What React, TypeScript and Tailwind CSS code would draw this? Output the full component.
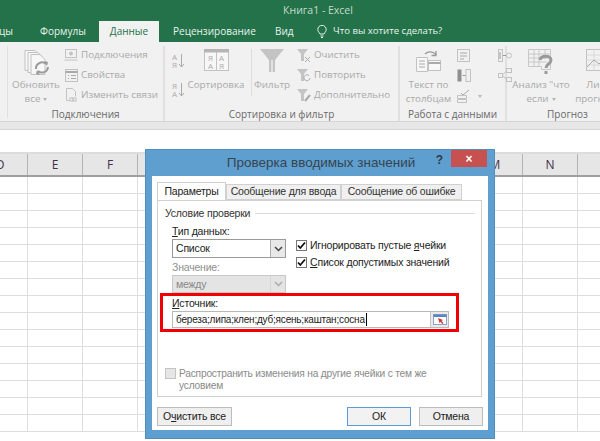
import type { ReactNode } from "react";

const ribbonFont = { fontFamily: '"Open Sans", "Noto Sans", sans-serif' };
const dialogFont = { fontFamily: '"Liberation Sans", "Noto Sans", sans-serif' };

// G to L sit behind the dialog
const columns = ["D", "E", "F", "", "", "", "", "", "", "M", "N", ""];
const rowCount = 16;

function Ico({ w, h, children }: { w: number; h: number; children: ReactNode }) {
  return (
    <svg width={w} height={h} viewBox={`0 0 ${w} ${h}`} fill="none" stroke="#c2c2c2" strokeWidth="1" className="shrink-0">
      {children}
    </svg>
  );
}

function SmallRow({ icon, label }: { icon: ReactNode; label: string }) {
  return (
    <div className="flex h-[20px] items-center gap-[3px] whitespace-nowrap text-[#a9a9a9]">
      <div className="flex w-[14px] justify-center">{icon}</div>
      <span>{label}</span>
    </div>
  );
}

function BigButton({ w, icon, lines, arrow }: { w: number; icon: ReactNode; lines: string[]; arrow?: boolean }) {
  return (
    <div className="flex shrink-0 flex-col items-center text-center leading-[14px] text-[#a9a9a9]" style={{ width: w }}>
      <div className="flex h-[29px] items-start justify-center">{icon}</div>
      <div className="whitespace-nowrap">{lines[0]}</div>
      {lines[1] && (
        <div className="whitespace-nowrap">
          {lines[1]}
          {arrow && <span className="ml-[3px] inline-block border-x-[2.5px] border-t-[3px] border-x-transparent border-t-[#b5b5b5] align-middle" />}
        </div>
      )}
    </div>
  );
}

function Group({ w, label, children }: { w: number; label: string; children: ReactNode }) {
  return (
    <div className="flex shrink-0 flex-col border-r-2 border-[#e0e0e0]" style={{ width: w }}>
      <div className="flex h-[61px] items-start">{children}</div>
      <div className="whitespace-nowrap text-center text-[10px] leading-[14px] text-[#6a6a6a]">{label}</div>
    </div>
  );
}

function Ribbon() {
  return (
    <div className="flex h-[79px] overflow-hidden bg-[#f1f1f1] pl-[7px] pt-[4px] text-[9.8px]" style={ribbonFont}>
      <div className="h-[72px] w-[1px] shrink-0 bg-[#e0e0e0]" />
      <Group w={157} label="Подключения">
        <div className="flex pl-[5px] pt-[3px]">
          <BigButton
            w={46}
            lines={["Обновить", "все"]}
            arrow
            icon={
              <Ico w={26} h={28}>
                <path d="M2 1.5h10l4 4v16H2z" fill="#f7f7f7" />
                <path d="M5 3.5h10l4 4v16H5z" fill="#f7f7f7" />
                <path d="M8 5.5h9l5 5v15H8z" fill="#f7f7f7" />
                <path d="M25 18a6 6 0 0 1-10 4M13 20a6 6 0 0 1 10-5" stroke="#9a9a9a" strokeWidth="2" />
                <path d="M21 12l4 1-1 4zM17 26l-4-1 1-4z" fill="#9a9a9a" stroke="none" />
              </Ico>
            }
          />
          <div className="ml-[5px] mt-[-4px] flex flex-col">
            <SmallRow
              label="Подключения"
              icon={
                <Ico w={14} h={12}>
                  <rect x="1.5" y="0.5" width="11" height="8" />
                  <path d="M0.5 11h13" />
                  <circle cx="7" cy="4.5" r="1.5" fill="#c2c2c2" />
                </Ico>
              }
            />
            <SmallRow
              label="Свойства"
              icon={
                <Ico w={13} h={13}>
                  <rect x="0.5" y="0.5" width="12" height="12" />
                  <path d="M0.5 3h12" strokeWidth="2" stroke="#aaa" />
                  <path d="M3 6.5h1M6 6.5h5M3 9.5h1M6 9.5h5" stroke="#aaa" />
                </Ico>
              }
            />
            <SmallRow
              label="Изменить связи"
              icon={
                <Ico w={12} h={14}>
                  <path d="M1.5 0.5h6l3 3v5M1.5 0.5v12h3" />
                  <rect x="5" y="10" width="3" height="3" />
                  <rect x="8" y="10" width="3" height="3" />
                </Ico>
              }
            />
          </div>
        </div>
      </Group>
      <Group w={235} label="Сортировка и фильтр">
        <div className="flex pl-[7px] pt-[3px]">
          <div className="flex w-[14px] flex-col gap-[9px] pt-[3px]">
            <Ico w={13} h={20}>
              <text x="0" y="8" fontSize="8" fill="#aaa" stroke="none">А</text>
              <text x="0" y="16" fontSize="8" fill="#aaa" stroke="none">Я</text>
              <path d="M9.5 2v13M7 12l2.5 3 2.5-3" stroke="#aaa" />
            </Ico>
            <Ico w={13} h={20}>
              <text x="0" y="8" fontSize="8" fill="#aaa" stroke="none">Я</text>
              <text x="0" y="16" fontSize="8" fill="#aaa" stroke="none">А</text>
              <path d="M9.5 2v13M7 12l2.5 3 2.5-3" stroke="#aaa" />
            </Ico>
          </div>
          <BigButton
            w={60}
            lines={["Сортировка"]}
            icon={
              <Ico w={25} h={22}>
                <rect x="0.5" y="0.5" width="24" height="21" fill="#f7f7f7" />
                <rect x="0" y="0" width="25" height="3.5" fill="#b5b5b5" stroke="none" />
                <path d="M12.5 3v18" />
                <text x="4" y="12" fontSize="8" fill="#aaa" stroke="none">Я</text>
                <text x="15" y="12" fontSize="8" fill="#aaa" stroke="none">А</text>
                <text x="4" y="20" fontSize="8" fill="#aaa" stroke="none">А</text>
                <text x="15" y="20" fontSize="8" fill="#aaa" stroke="none">Я</text>
              </Ico>
            }
          />
          <div className="ml-[5px] h-[47px] w-[1px] bg-[#dcdcdc]" />
          <BigButton
            w={40}
            lines={["Фильтр"]}
            icon={
              <Ico w={24} h={24}>
                <path d="M0 0h24l-9 11v12h-6V11z" fill="#c4c4c4" stroke="none" />
                <path d="M11 11h2v12h-2z" fill="#e2e2e2" stroke="none" />
              </Ico>
            }
          />
          <div className="ml-[5px] mt-[-4px] flex flex-col">
            <SmallRow
              label="Очистить"
              icon={
                <Ico w={14} h={13}>
                  <path d="M0 0h11L7 5v7H4V5z" fill="#c4c4c4" stroke="none" />
                  <path d="M8 8l5 5M13 8l-5 5" stroke="#aaa" />
                </Ico>
              }
            />
            <SmallRow
              label="Повторить"
              icon={
                <Ico w={14} h={13}>
                  <path d="M0 0h11L7 5v7H4V5z" fill="#c4c4c4" stroke="none" />
                  <path d="M13 9a3 3 0 1 1-1-2.5" stroke="#aaa" />
                </Ico>
              }
            />
            <SmallRow
              label="Дополнительно"
              icon={
                <Ico w={14} h={13}>
                  <path d="M0 0h11L7 5v7H4V5z" fill="#c4c4c4" stroke="none" />
                  <path d="M8 12l5-6" stroke="#aaa" strokeWidth="2" />
                </Ico>
              }
            />
          </div>
        </div>
      </Group>
      <Group w={107} label="Работа с данными">
        <div className="flex pl-[5px] pt-[3px]">
          <BigButton
            w={47}
            lines={["Текст по", "столбцам"]}
            icon={
              <Ico w={27} h={24}>
                <path d="M1.5 8.5h11v14h-11z" fill="#f7f7f7" />
                <path d="M4 12h6M4 15h6M4 18h6" stroke="#aaa" />
                <rect x="13.5" y="11.5" width="12" height="10" fill="#f7f7f7" />
                <path d="M13.5 14h12" stroke="#aaa" strokeWidth="2" />
                <path d="M10 5a7 7 0 0 1 11 1M21 2v4.5h-4.5" stroke="#999" strokeWidth="1.3" />
              </Ico>
            }
          />
          <div className="ml-[5px] flex flex-col gap-[7px]">
            <Ico w={13} h={13}>
              <rect x="0.5" y="0.5" width="12" height="12" />
              <path d="M3 4h7M3 7h7M3 10h4" stroke="#aaa" />
            </Ico>
            <Ico w={14} h={13}>
              <rect x="0.5" y="0.5" width="4" height="12" fill="#8f8f8f" stroke="none" />
              <rect x="9" y="0.5" width="4.5" height="12" />
              <path d="M5.5 6.5h3" stroke="#999" />
            </Ico>
            <div className="flex items-center gap-[7px]">
              <Ico w={14} h={14}>
                <path d="M0.5 6.5h9v3h-9zM0.5 10.5h9v3h-9z" />
                <path d="M4 4l2 2 6-5" stroke="#aaa" />
              </Ico>
              <span className="inline-block border-x-[2.5px] border-t-[3px] border-x-transparent border-t-[#b5b5b5]" />
            </div>
          </div>
          <div className="ml-[16px] flex flex-col gap-[6px]">
            <Ico w={14} h={13}>
              <rect x="0.5" y="0.5" width="4" height="12" />
              <path d="M2 3v7" stroke="#999" />
              <circle cx="11" cy="6.5" r="2.5" />
              <path d="M5 6.5h3" stroke="#999" />
            </Ico>
            <Ico w={14} h={14}>
              <rect x="0.5" y="5.5" width="4" height="4" />
              <rect x="8.5" y="0.5" width="5" height="4" />
              <rect x="8.5" y="9.5" width="5" height="4" />
              <path d="M4.5 7L8.5 3M4.5 8L8.5 11" />
            </Ico>
          </div>
        </div>
      </Group>
      <div className="flex shrink-0 flex-col">
        <div className="flex h-[61px] items-start pl-[5px] pt-[3px]">
          <BigButton
            w={58}
            lines={['Анализ "что', "если"]}
            arrow
            icon={
              <Ico w={26} h={27}>
                <path d="M0.5 0.5h22v20h-9v-3h-13zM0.5 5h22M0.5 9h22M0.5 13h18M6 0.5v17M11 0.5v17M17 0.5v10" stroke="#c8c8c8" />
                <path d="M12 11c1-5 11-5 11 0 0 4-5 4-5 8M18 22v3" stroke="#9a9a9a" strokeWidth="3" />
              </Ico>
            }
          />
          <div className="ml-[5px]">
            <BigButton
              w={45}
              lines={["Лист", "прогноза"]}
              icon={
                <Ico w={24} h={22}>
                  <rect x="0.5" y="0.5" width="23" height="21" />
                  <path d="M0.5 6h23M0.5 11h23M0.5 16h23M8 0.5v21M16 0.5v21" stroke="#d8d8d8" />
                  <path d="M1 18l7-7 5 4 6-7" stroke="#aaa" />
                </Ico>
              }
            />
          </div>
        </div>
        <div className="pl-[40px] text-[10px] leading-[14px] text-[#6a6a6a]">Прогноз</div>
      </div>
    </div>
  );
}

function Sheet() {
  return (
    <div className="h-[311px] overflow-hidden bg-white">
      <div className="h-[9px] border-y border-[#d5d5d5] bg-[#e7e7e7]" />
      <div className="h-[22px]" />
      <div className="ml-[-27px] flex h-[25px] w-[660px] border-y-2 border-t-[#dcdcdc] border-b-[#9f9f9f] bg-[#e6e6e6]" style={ribbonFont}>
        {columns.map((c, i) => (
          <div key={i} className="flex h-full w-[55px] shrink-0 items-center justify-center border-r border-[#b4b4b4] text-[12px] text-[#44304a]">
            {c}
          </div>
        ))}
      </div>
      {Array.from({ length: rowCount }).map((_, r) => (
        <div key={r} className="ml-[-27px] flex h-[17px] w-[660px]">
          {columns.map((_, i) => (
            <div key={i} className="h-full w-[55px] shrink-0 border-r border-b border-[#dedede]" />
          ))}
        </div>
      ))}
    </div>
  );
}

function Check({ checked, disabled }: { checked?: boolean; disabled?: boolean }) {
  return (
    <div className={`flex h-[11px] w-[11px] shrink-0 items-center justify-center border ${disabled ? "border-[#c4c4c4] bg-[#e6e6e6]" : "border-[#777] bg-white"}`}>
      {checked && (
        <svg width="9" height="9" viewBox="0 0 9 9" fill="none" stroke="#111" strokeWidth="1.8">
          <path d="M1 4.5l2.3 2.5L8 1.5" />
        </svg>
      )}
    </div>
  );
}

function Select({ value, disabled }: { value: string; disabled?: boolean }) {
  return (
    <div className={`flex w-[114px] shrink-0 items-stretch border ${disabled ? "h-[18px] border-[#c8c8c8] bg-[#e4e4e4] text-[#8a8a8a]" : "h-[19px] border-[#9a9a9a] bg-white text-[#222]"}`}>
      <div className="flex-1 pl-[3px] leading-[17px]">{value}</div>
      <div className={`flex w-[15px] items-center justify-center border-l ${disabled ? "border-[#d6d6d6]" : "border-[#b0b0b0] bg-[#e8e8e8]"}`}>
        <svg width="9" height="6" viewBox="0 0 9 6" fill="none" stroke={disabled ? "#aaa" : "#444"} strokeWidth="1.5">
          <path d="M1 1l3.5 3.5L8 1" />
        </svg>
      </div>
    </div>
  );
}

function Tab({ label, active, w }: { label: string; active?: boolean; w: number }) {
  return (
    <div
      className={`flex items-center justify-center whitespace-nowrap border border-[#d0d0d0] ${active ? "h-[19px] border-b-white bg-white text-[#222]" : "mt-[2px] h-[16px] bg-[#f0f0f0] text-[#333]"}`}
      style={{ width: w, marginBottom: active ? -1 : 0 }}
    >
      {label}
    </div>
  );
}

function DlgButton({ children, primary, w }: { children: ReactNode; primary?: boolean; w: number }) {
  return (
    <div
      className={`flex h-[19px] items-center justify-center border text-[#222] ${primary ? "border-[#5b9bd5] bg-[#f2f2f2]" : "border-[#bcbcbc] bg-[#efefef]"}`}
      style={{ width: w }}
    >
      {children}
    </div>
  );
}

function Dialog() {
  return (
    <div className="absolute left-[145px] top-[149px] flex h-[290px] w-[350px] flex-col border border-[#4f8fc0] bg-[#5f9fd0] px-[6px] pb-[8px] text-[10.5px] tracking-[-0.2px]" style={dialogFont}>
      <div className="relative flex h-[26px] shrink-0 items-center justify-center pl-[2px] text-[13.5px] tracking-normal text-[#36454f]">
        Проверка вводимых значений
        <span className="absolute right-[45px] top-[1px] text-[12px] font-bold leading-[18px] text-[#2e3b44]">?</span>
        <div className="absolute right-[1px] top-0 flex h-[17px] w-[36px] items-center justify-center bg-[#c75050] text-[12px] font-bold text-white">×</div>
      </div>
      <div className="flex flex-1 flex-col bg-white px-[5px] pt-[6px]">
        <div className="flex">
          <Tab label="Параметры" active w={69} />
          <Tab label="Сообщение для ввода" w={115} />
          <Tab label="Сообщение об ошибке" w={121} />
        </div>
        <div className="flex h-[197px] w-[325px] shrink-0 flex-col border border-[#d0d0d0] pl-[7px] pr-[6px] pt-[5px]">
          <div className="flex items-center gap-[5px] leading-[15px] text-[#333]">
            <span className="whitespace-nowrap">Условие проверки</span>
            <div className="h-[1px] flex-1 bg-[#dcdcdc]" />
          </div>
          <div className="ml-[7px] mt-[3px] leading-[14px] text-[#222]">
            <span className="underline">Т</span>ип данных:
          </div>
          <div className="ml-[7px] mt-[1px] flex h-[19px] items-start">
            <Select value="Список" />
            <div className="ml-[10px] mt-[-1px] flex flex-col gap-[3px] leading-[14px] text-[#222]">
              <div className="flex h-[14px] items-center gap-[3px] whitespace-nowrap">
                <Check checked />
                <span>
                  Игнорировать пустые <span className="underline">я</span>чейки
                </span>
              </div>
              <div className="flex h-[14px] items-center gap-[3px] whitespace-nowrap">
                <Check checked />
                <span>
                  <span className="underline">С</span>писок допустимых значений
                </span>
              </div>
            </div>
          </div>
          <div className="ml-[7px] mt-[2px] leading-[14px] text-[#8f8f8f]">Значение:</div>
          <div className="ml-[7px] mt-[1px]">
            <Select value="между" disabled />
          </div>
          <div className="ml-[-5px] flex h-[39px] w-[299px] flex-col border-[3px] border-[#f00000] pl-[9px] pt-[1px]">
            <div className="leading-[13px] text-[#222]">
              <span className="underline">И</span>сточник:
            </div>
            <div className="mt-[1px] flex h-[17px] w-[277px] border border-[#b8b8b8] bg-white">
              <div className="flex flex-1 items-center pl-[3px] text-[10px] text-[#222]">
                <span className="whitespace-nowrap">береза;липа;клен;дуб;ясень;каштан;сосна</span>
                <span className="ml-[1px] h-[13px] w-[1px] bg-black" />
              </div>
              <div className="flex w-[18px] items-center justify-center border-l border-[#c4c4c4] bg-[#e9e9e9]">
                <svg width="14" height="11" viewBox="0 0 14 11">
                  <rect x="0.5" y="0.5" width="13" height="10" fill="#fff" stroke="#8aa4c4" />
                  <rect x="0.5" y="0.5" width="13" height="2.5" fill="#5a86c0" />
                  <path d="M5 4l5 2-1.5 1 2 2-1 1-2-2-1 1z" fill="#d03a3a" />
                </svg>
              </div>
            </div>
          </div>
          <div className="mt-[36px] flex items-start gap-[3px] text-[10.2px] leading-[12px] text-[#8a8a8a]">
            <Check disabled />
            <span className="w-[262px]">Распространить изменения на другие ячейки с тем же условием</span>
          </div>
        </div>
        <div className="mt-[10px] flex items-center">
          <DlgButton w={75}>
            <span>
              О<span className="underline">ч</span>истить все
            </span>
          </DlgButton>
          <div className="flex-1" />
          <DlgButton primary w={64}>ОК</DlgButton>
          <div className="w-[8px]" />
          <DlgButton w={64}>Отмена</DlgButton>
        </div>
      </div>
    </div>
  );
}

export default function App() {
  return (
    <div className="relative h-[441px] w-[600px] overflow-hidden bg-white" style={ribbonFont}>
      <div className="h-[42px] bg-[#23724a]">
        <div className="flex h-[21px] items-center justify-center pl-[36px] text-[10.5px] text-[#c4dccb]">Книга1 - Excel</div>
        <div className="flex h-[21px] items-center whitespace-nowrap text-[10px] text-[#e9f2ec]">
          <span className="ml-[-1px] w-[41px]">цы</span>
          <span className="w-[59px]">Формулы</span>
          <div className="flex h-[21px] w-[60px] items-center justify-center bg-[#f1f1f1] text-[#23724a]">Данные</div>
          <span className="ml-[14px] w-[102px]">Рецензирование</span>
          <span className="w-[42px]">Вид</span>
          <svg width="10" height="13" viewBox="0 0 10 13" fill="none" stroke="#e9f2ec" strokeWidth="1">
            <path d="M3 9C2 7 .8 6.5.8 4.5a4.2 4.2 0 0 1 8.4 0C9.2 6.5 8 7 7 9zM3.5 11h3M4 12.5h2" />
          </svg>
          <span className="ml-[6px] text-[9.6px]">Что вы хотите сделать?</span>
        </div>
      </div>
      <Ribbon />
      <Sheet />
      <Dialog />
    </div>
  );
}
